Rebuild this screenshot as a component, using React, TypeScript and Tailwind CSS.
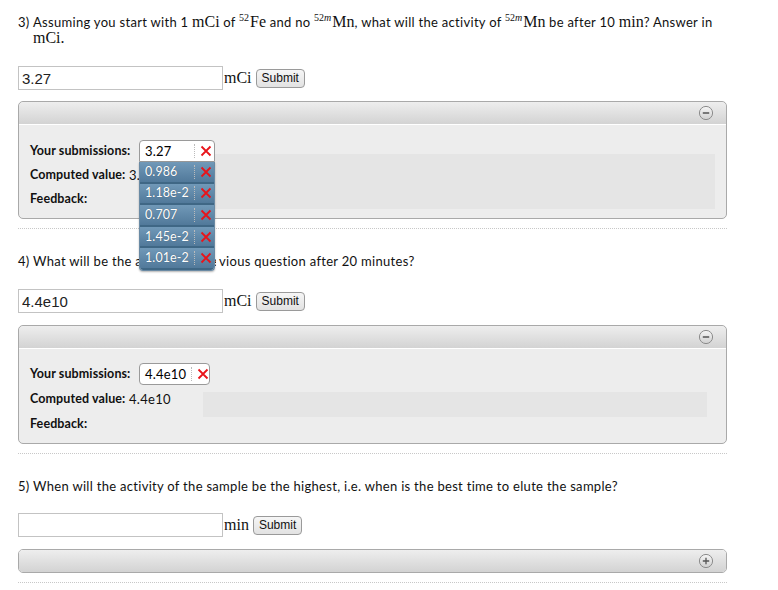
import React from "react";

const SERIF = "font-['Liberation_Serif',serif] tracking-normal leading-[16px]";
const LABEL = "font-bold text-[12.5px] tracking-[0.1px]";

function CircleIcon({ plus }: { plus?: boolean }) {
  return (
    <svg width="16" height="16" viewBox="0 0 16 16">
      <defs>
        <linearGradient id={plus ? "gp" : "gm"} x1="0" y1="0" x2="0" y2="1">
          <stop offset="0" stopColor="#f6f6f6" />
          <stop offset="1" stopColor="#d0d0d0" />
        </linearGradient>
      </defs>
      <circle cx="8" cy="8" r="6.6" fill={`url(#${plus ? "gp" : "gm"})`} stroke="#8c8c8c" strokeWidth="1" />
      <line x1="4.8" y1="8" x2="11.2" y2="8" stroke="#555" strokeWidth="1.3" />
      {plus && <line x1="8" y1="4.8" x2="8" y2="11.2" stroke="#555" strokeWidth="1.3" />}
    </svg>
  );
}

function RedX() {
  return (
    <svg width="12" height="12" viewBox="0 0 12 12">
      <path d="M1.5 1.5 L10.5 10.5 M10.5 1.5 L1.5 10.5" stroke="#e8141a" strokeWidth="1.8" />
    </svg>
  );
}

function Sep() {
  return <span className="mx-[5px] h-[14px] border-l border-dotted border-[#bbb]" />;
}

function AnswerRow({ value, unit }: { value: string; unit: string }) {
  return (
    <div className="flex items-center h-[24px]">
      <input
        readOnly
        value={value}
        className="w-[205px] h-[24px] border border-[#c3c3c3] px-[3px] text-[15px] text-[#222] tracking-normal font-['Liberation_Sans',sans-serif] outline-none"
      />
      <span className={`${SERIF} text-[16px] ml-[1px] text-[#111]`}>{unit}</span>
      <button className="ml-[4px] h-[19px] px-[5px] text-[12px] leading-none tracking-normal font-['Liberation_Sans',sans-serif] text-[#111] border border-[#9a9a9a] rounded-[4px] bg-gradient-to-b from-[#f6f6f6] to-[#e2e2e2]">
        Submit
      </button>
    </div>
  );
}

function PanelHeader({ plus }: { plus?: boolean }) {
  return (
    <div className="h-[22px] bg-gradient-to-b from-[#eeeeee] to-[#d3d3d3] flex items-center justify-end pr-[12px]">
      <CircleIcon plus={plus} />
    </div>
  );
}

function Dotted() {
  return <div className="h-0 border-t border-dotted border-[#c8c8c8]" />;
}

function Sup({ children }: { children: React.ReactNode }) {
  return (
    <span className="font-['Liberation_Serif',serif] tracking-normal text-[10px] leading-none relative top-[-6px] mr-[1px]">
      {children}
    </span>
  );
}

export default function App() {
  const items = ["0.986", "1.18e-2", "0.707", "1.45e-2", "1.01e-2"];
  return (
    <div className="w-[778px] h-[590px] bg-white overflow-hidden font-['Lato',sans-serif] text-[13px] leading-[16px] tracking-[0.3px] text-[#111]">
      <div className="pl-[18px] w-[727px]">
        {/* Question 3 */}
        <div className="pt-[14px] flex h-[46px]">
          <span className="w-[15px] shrink-0">3)</span>
          <div className="whitespace-nowrap">
            Assuming you start with 1 <span className={`${SERIF} text-[16px]`}>mCi</span> of{" "}
            <Sup>52</Sup>
            <span className={`${SERIF} text-[16px]`}>Fe</span> and no{" "}
            <Sup>
              52<i>m</i>
            </Sup>
            <span className={`${SERIF} text-[16px]`}>Mn</span>, what will the activity of{" "}
            <Sup>
              52<i>m</i>
            </Sup>
            <span className={`${SERIF} text-[16px]`}>Mn</span> be after 10{" "}
            <span className={`${SERIF} text-[16px]`}>min</span>? Answer in
            <br />
            <span className={`${SERIF} text-[16px]`}>mCi.</span>
          </div>
        </div>

        <div className="mt-[20px]">
          <AnswerRow value="3.27" unit="mCi" />
        </div>

        {/* Panel 1 */}
        <div className="mt-[11px] border border-[#a9a9a9] rounded-[5px] bg-[#ededed] relative">
          <div className="rounded-t-[5px] overflow-hidden">
            <PanelHeader />
          </div>
          <div className="border-t border-white flex h-[94px]">
            <div className="w-[184px] pl-[11px] pt-[15px] shrink-0">
              <div className="flex items-center h-[22px]">
                <span className={`${LABEL} w-[109px] shrink-0 whitespace-nowrap`}>Your submissions:</span>
                <div className="relative">
                  <div className="w-[76px] h-[22px] bg-white border border-[#9a9a9a] rounded-t-[4px] flex items-center pl-[5px] text-[13px] tracking-[0.2px] text-black">
                    <span className="w-[44px]">3.27</span>
                    <Sep />
                    <RedX />
                  </div>
                  <div className="absolute left-0 top-[22px] w-[76px] z-10 rounded-b-[4px] overflow-hidden border-x border-b border-[#6a8aa4] shadow-[0_1px_2px_rgba(0,0,0,0.3)]">
                    {items.map((v) => (
                      <div
                        key={v}
                        className="h-[21.6px] flex items-center pl-[5px] text-[12.5px] tracking-[0.1px] text-white bg-gradient-to-b from-[#7199b8] to-[#51799a] border-b-2 border-[#3f6785] [text-shadow:0_0_1px_rgba(0,0,0,0.4)]"
                      >
                        <span className="w-[44px] whitespace-nowrap">{v}</span>
                        <Sep />
                        <RedX />
                      </div>
                    ))}
                  </div>
                </div>
              </div>
              <div className="mt-[2px] h-[22px] flex items-center whitespace-nowrap">
                <span className={LABEL}>Computed value:</span>&nbsp;3.27
              </div>
              <div className={`mt-[2px] h-[22px] flex items-center ${LABEL}`}>Feedback:</div>
            </div>
            <div className="flex-1 mr-[11px] mt-[29px] h-[55px] bg-[#e5e5e5]" />
          </div>
        </div>

        <div className="mt-[9px]">
          <Dotted />
        </div>

        {/* Question 4 */}
        <div className="mt-[24px] whitespace-nowrap">
          4) What will be the a
          <span className="inline-block w-[74px] mr-[3px] overflow-hidden align-bottom">nswer to the pre</span>
          vious question after 20 minutes?
        </div>

        <div className="mt-[20px]">
          <AnswerRow value="4.4e10" unit="mCi" />
        </div>

        {/* Panel 2 */}
        <div className="mt-[12px] border border-[#a9a9a9] rounded-[5px] bg-[#ededed]">
          <div className="rounded-t-[5px] overflow-hidden">
            <PanelHeader />
          </div>
          <div className="border-t border-white flex h-[95px]">
            <div className="w-[184px] pl-[11px] pt-[14px] shrink-0">
              <div className="flex items-center h-[22px]">
                <span className={`${LABEL} w-[109px] shrink-0 whitespace-nowrap`}>Your submissions:</span>
                <div className="w-[73px] h-[22px] bg-white border border-[#9a9a9a] rounded-[4px] flex items-center pl-[5px] text-[13px] tracking-[0.2px] text-black">
                  <span className="w-[41px] whitespace-nowrap">4.4e10</span>
                  <Sep />
                  <RedX />
                </div>
              </div>
              <div className="mt-[3px] h-[22px] flex items-center whitespace-nowrap">
                <span className={LABEL}>Computed value:</span>&nbsp;4.4e10
              </div>
              <div className={`mt-[3px] h-[22px] flex items-center ${LABEL}`}>Feedback:</div>
            </div>
            <div className="flex-1 mr-[19px] mt-[43px] h-[25px] bg-[#e5e5e5]" />
          </div>
        </div>

        <div className="mt-[9px]">
          <Dotted />
        </div>

        {/* Question 5 */}
        <div className="mt-[24px] whitespace-nowrap">
          5) When will the activity of the sample be the highest, i.e. when is the best time to elute the sample?
        </div>

        <div className="mt-[19px]">
          <AnswerRow value="" unit="min" />
        </div>

        {/* Panel 3 collapsed */}
        <div className="mt-[12px] border border-[#a9a9a9] rounded-[5px] overflow-hidden">
          <PanelHeader plus />
        </div>

        <div className="mt-[9px]">
          <Dotted />
        </div>
      </div>
    </div>
  );
}
